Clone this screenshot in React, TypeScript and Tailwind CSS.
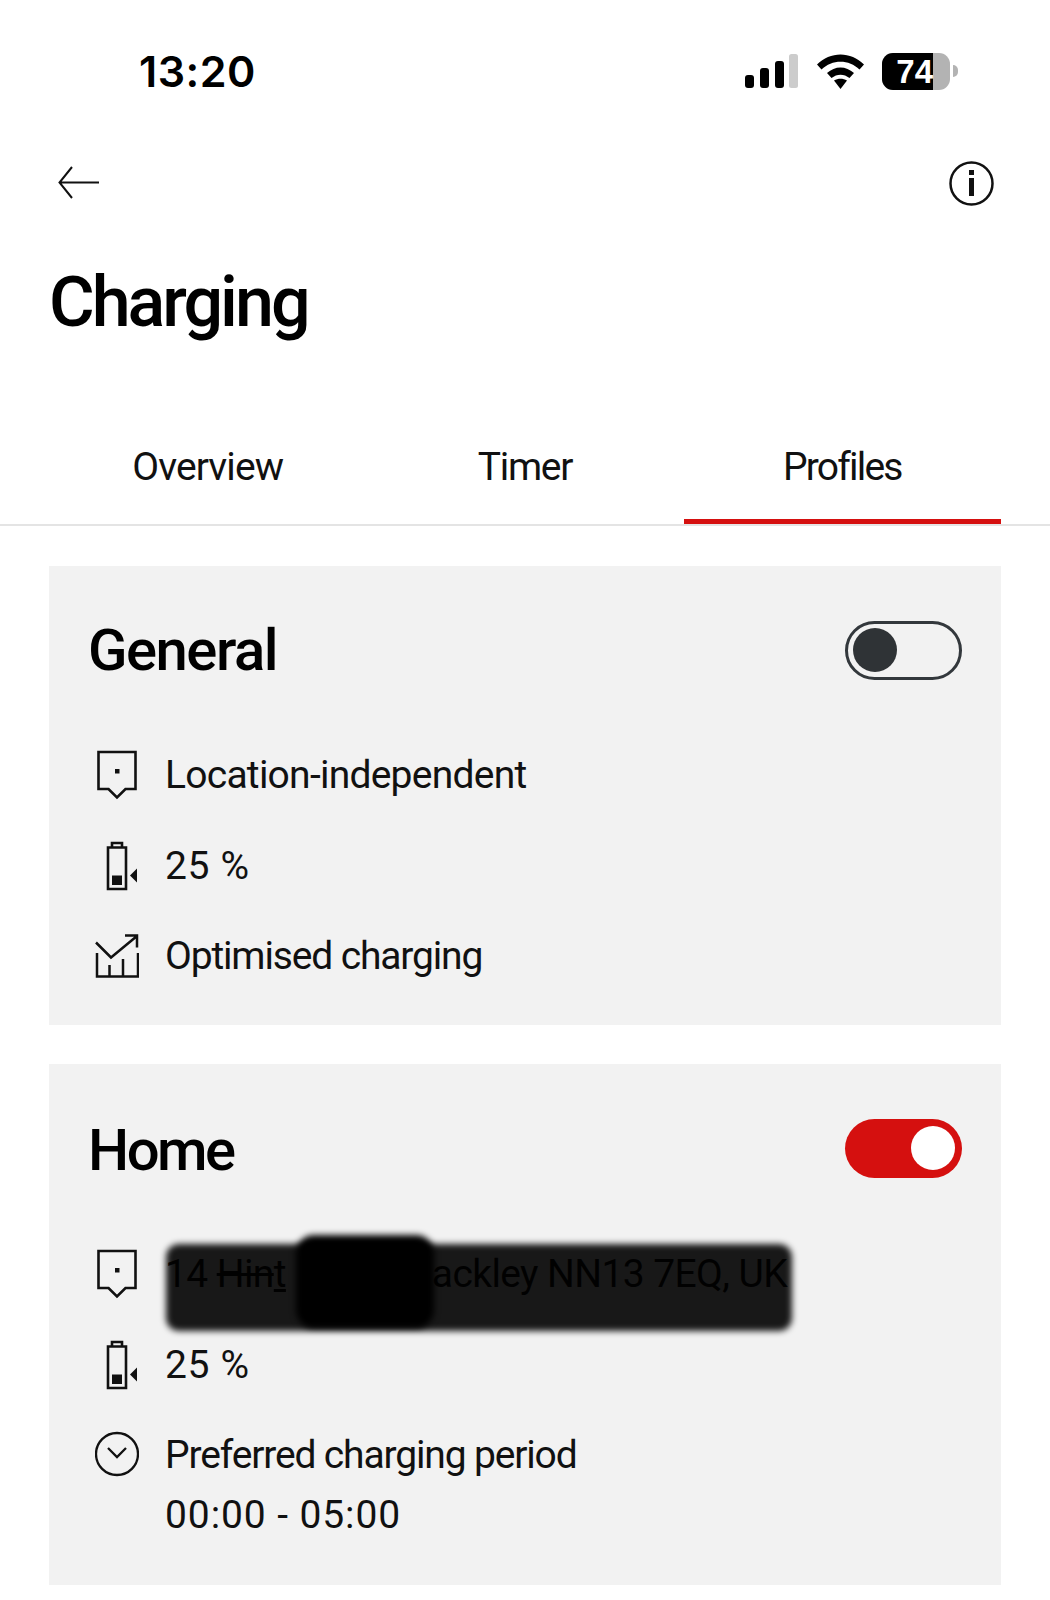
import React from "react";

const Pin = () => (
  <svg width="44" height="50" viewBox="0 0 44 50" fill="none" stroke="#111" strokeWidth="2.600">
    <path d="M3.500 2h37v37H30.500L22 47.500 13.500 39H3.500z" />
    <rect x="20" y="19" width="4.500" height="4.500" fill="#111" stroke="none" />
  </svg>
);

const BatteryLow = () => (
  <svg width="44" height="50" viewBox="0 0 44 50" fill="none" stroke="#111" strokeWidth="2.600">
    <path d="M13 48V6.500h18V48zM17 6.500V2h10v4.500" />
    <rect x="17" y="34.500" width="10" height="9.500" fill="#111" stroke="none" />
    <path d="M42 27.500v14l-7-7z" fill="#111" stroke="none" />
  </svg>
);

const ChartUp = () => (
  <svg width="44" height="46" viewBox="0 0 44 46" fill="none" stroke="#111" strokeWidth="2.500">
    <path d="M1 9.500l15 15L42 3M30 2.500h12v12" />
    <path d="M2 20v23.500h41V20M14.500 43.500V32M28 43.500V26" />
  </svg>
);

const ClockChevron = () => (
  <svg width="44" height="46" viewBox="0 0 44 46" fill="none" stroke="#111" strokeWidth="2.300" className="mt-[6px]">
    <circle cx="22" cy="23" r="21" />
    <path d="M13 17l9 9 9-9" />
  </svg>
);

const Toggle = ({ on }: { on: boolean }) =>
  on ? (
    <div className="flex h-[59px] w-[117px] items-center justify-end rounded-full bg-[#d5100f] pr-[7px]">
      <div className="h-[44px] w-[44px] rounded-full bg-white" />
    </div>
  ) : (
    <div className="flex h-[59px] w-[117px] items-center rounded-full border-[3px] border-[#33383c] pl-[5px]">
      <div className="h-[44px] w-[44px] rounded-full bg-[#2f3336]" />
    </div>
  );

const Row = ({
  icon,
  children,
  className = "items-center h-[90.500px]",
}: {
  icon: React.ReactNode;
  children: React.ReactNode;
  className?: string;
}) => (
  <div className={`relative flex gap-[26px] pl-[7px] ${className}`}>
    <div className="flex w-[44px] shrink-0 justify-center">{icon}</div>
    <div className="text-[39px] leading-[60px] text-[#111]">{children}</div>
  </div>
);

const Card = ({
  title,
  titleClass,
  on,
  children,
  className,
}: {
  title: string;
  titleClass: string;
  on: boolean;
  children: React.ReactNode;
  className: string;
}) => (
  <section className={`mx-[49px] bg-[#f2f2f2] px-[39px] ${className}`}>
    <div className="flex h-[110px] items-center justify-between pt-[58px]">
      <h2 className={`text-[58px] leading-[60px] font-medium text-black ${titleClass}`}>{title}</h2>
      <Toggle on={on} />
    </div>
    <div className="pt-[54px]">{children}</div>
  </section>
);

// Marker scribble laid over the street address
const Redaction = () => (
  <>
    <div className="absolute top-[15px] left-[78px] h-[87px] w-[626px] rounded-[13px] bg-black/[.9] blur-[3px]" />
    <div className="absolute top-[6px] left-[208px] h-[93px] w-[138px] rounded-[18px] bg-black blur-[3px]" />
  </>
);

export default function App() {
  return (
    <div
      className="h-[1600px] w-[1050px] overflow-hidden bg-white"
      style={{ fontFamily: "Roboto, sans-serif" }}
    >
      {/* status bar */}
      <div className="flex h-[142px] items-center justify-between pr-[92px] pl-[139px]">
        <span className="font-['Inter',sans-serif] text-[43px] font-semibold tracking-[0.5px] text-black">
          13:20
        </span>
        <div className="flex items-center gap-[18px]">
          <svg width="54" height="34" viewBox="0 0 54 34">
            <rect x="0" y="21" width="9" height="13" rx="3" fill="#000" />
            <rect x="15" y="14" width="9" height="20" rx="3" fill="#000" />
            <rect x="30" y="7" width="9" height="27" rx="3" fill="#000" />
            <rect x="44" y="0" width="9" height="34" rx="2.500" fill="#ccc" />
          </svg>
          <svg width="47" height="35" viewBox="0 0 47 35">
            <path d="M0 10.500C13-3 34-3 47 10.500l-4.500 5C32 5 15 5 4.500 15.500z" fill="#000" />
            <path d="M10 19c8-7.500 19-7.500 27 0l-4.500 5c-5.500-4.500-12.500-4.500-18 0z" fill="#000" />
            <path d="M17 26.500c4-2.500 9-2.500 13 0l-6.500 8.500z" fill="#000" />
          </svg>
          <div className="flex items-center gap-[3px]">
            <div className="flex h-[37px] w-[68px] overflow-hidden rounded-[11px] bg-[#b3b3b3]">
              <div className="flex h-full w-[51px] items-center justify-end bg-black">
                <span className="font-['Liberation_Sans',sans-serif] text-[33px] leading-none font-bold text-white">
                  74
                </span>
              </div>
            </div>
            <div className="h-[12px] w-[5px] rounded-r-full bg-[#b3b3b3]" />
          </div>
        </div>
      </div>

      {/* nav row */}
      <div className="flex h-[82px] items-center justify-between pr-[56px] pl-[58px]">
        <svg width="41" height="33" viewBox="0 0 41 33" fill="none" stroke="#111" strokeWidth="2" className="-mt-[2px]">
          <path d="M41 16.500H2M14 1L1.500 16.500 14 32" />
        </svg>
        <svg width="45" height="45" viewBox="0 0 45 45" fill="none">
          <circle cx="22.500" cy="22.500" r="21" stroke="#111" strokeWidth="2.500" />
          <rect x="20" y="9" width="5" height="5" fill="#111" />
          <rect x="20" y="17" width="5" height="18" fill="#111" />
        </svg>
      </div>

      <h1 className="h-[190px] pt-[38px] pl-[49px] text-[70px] leading-[80px] font-medium tracking-[-3px] text-black">
        Charging
      </h1>

      {/* tabs */}
      <div className="border-b-2 border-[#e4e4e4]">
        <div className="mx-[49px] grid h-[110px] grid-cols-3 text-center text-[39px] text-[#111]">
          <div className="flex items-center justify-center pb-[4px] tracking-[-0.9px]">Overview</div>
          <div className="flex items-center justify-center pb-[4px] tracking-[-1.3px]">Timer</div>
          <div className="flex items-center justify-center border-b-[5px] border-[#d5100f] pt-[1px] tracking-[-1.8px]">
            Profiles
          </div>
        </div>
      </div>

      <div className="mt-[40px] flex flex-col gap-[39px]">
        <Card title="General" titleClass="tracking-[-1.500px]" on={false} className="h-[459px]">
          <Row icon={<Pin />}>
            <span className="tracking-[-0.750px]">Location-independent</span>
          </Row>
          <Row icon={<BatteryLow />}>
            <span className="tracking-[0.700px]">25 %</span>
          </Row>
          <Row icon={<ChartUp />}>
            <span className="tracking-[-1.150px]">Optimised charging</span>
          </Row>
        </Card>

        <Card title="Home" titleClass="pt-[3px] tracking-[-2.500px]" on className="h-[521px]">
          <div className="pt-[1px]">
            <Row icon={<Pin />}>
              <span className="inline-flex w-[622px] justify-between tracking-[-0.600px]">
                <span>
                  14 <span className="line-through">Hin</span>
                  <span className="underline">t</span>
                </span>
                <span>ackley NN13 7EQ, UK</span>
              </span>
              <Redaction />
            </Row>
            <Row icon={<BatteryLow />}>
              <span className="tracking-[0.700px]">25 %</span>
            </Row>
            <Row icon={<ClockChevron />} className="items-start pt-[15px]">
              <div className="tracking-[-1.150px]">Preferred charging period</div>
              <div className="tracking-[0.900px]">00:00 - 05:00</div>
            </Row>
          </div>
        </Card>
      </div>
    </div>
  );
}
